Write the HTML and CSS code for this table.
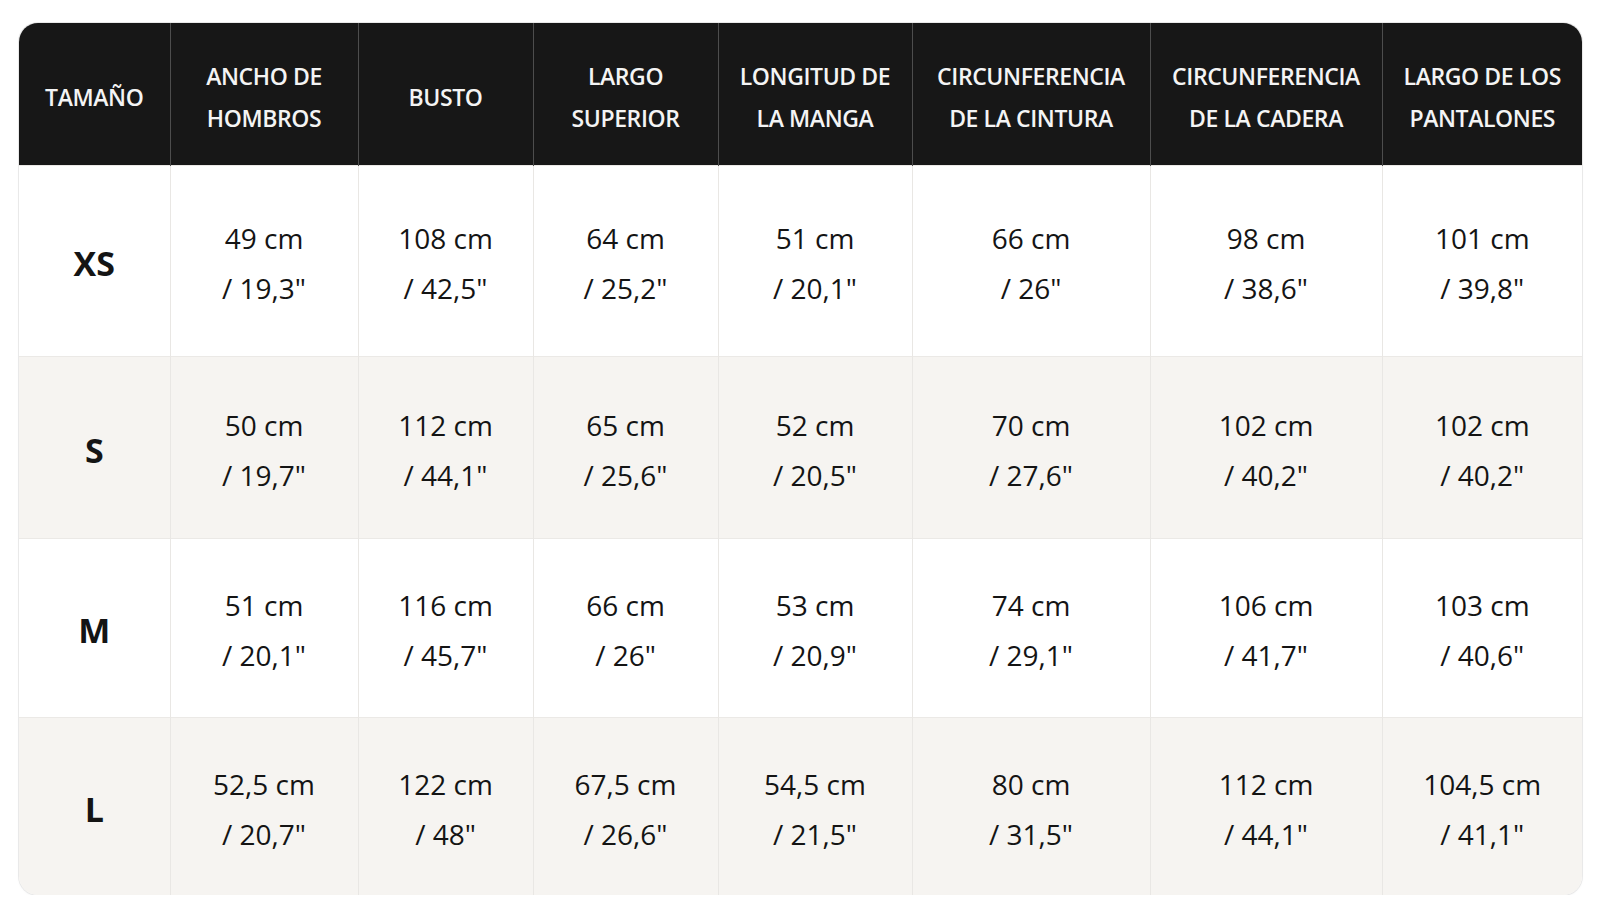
FILE: index.html
```html
<!DOCTYPE html>
<html lang="es">
<head>
<meta charset="utf-8">
<title>Tabla de tallas</title>
<link rel="stylesheet" href="styles.css">
</head>
<body>
<div class="wrap">
<table class="sizes">
<colgroup>
<col class="c1"><col class="c2"><col class="c3"><col class="c4"><col class="c5"><col class="c6"><col class="c7"><col class="c8">
</colgroup>
<thead>
<tr>
<th>TAMAÑO</th>
<th>ANCHO DE<br>HOMBROS</th>
<th>BUSTO</th>
<th>LARGO<br>SUPERIOR</th>
<th>LONGITUD DE<br>LA MANGA</th>
<th>CIRCUNFERENCIA<br>DE LA CINTURA</th>
<th>CIRCUNFERENCIA<br>DE LA CADERA</th>
<th>LARGO DE LOS<br>PANTALONES</th>
</tr>
</thead>
<tbody>
<tr class="r1">
<td class="size">XS</td>
<td>49 cm<br>/ 19,3"</td>
<td>108 cm<br>/ 42,5"</td>
<td>64 cm<br>/ 25,2"</td>
<td>51 cm<br>/ 20,1"</td>
<td>66 cm<br>/ 26"</td>
<td>98 cm<br>/ 38,6"</td>
<td>101 cm<br>/ 39,8"</td>
</tr>
<tr class="r2 alt">
<td class="size">S</td>
<td>50 cm<br>/ 19,7"</td>
<td>112 cm<br>/ 44,1"</td>
<td>65 cm<br>/ 25,6"</td>
<td>52 cm<br>/ 20,5"</td>
<td>70 cm<br>/ 27,6"</td>
<td>102 cm<br>/ 40,2"</td>
<td>102 cm<br>/ 40,2"</td>
</tr>
<tr class="r3">
<td class="size">M</td>
<td>51 cm<br>/ 20,1"</td>
<td>116 cm<br>/ 45,7"</td>
<td>66 cm<br>/ 26"</td>
<td>53 cm<br>/ 20,9"</td>
<td>74 cm<br>/ 29,1"</td>
<td>106 cm<br>/ 41,7"</td>
<td>103 cm<br>/ 40,6"</td>
</tr>
<tr class="r4 alt">
<td class="size">L</td>
<td>52,5 cm<br>/ 20,7"</td>
<td>122 cm<br>/ 48"</td>
<td>67,5 cm<br>/ 26,6"</td>
<td>54,5 cm<br>/ 21,5"</td>
<td>80 cm<br>/ 31,5"</td>
<td>112 cm<br>/ 44,1"</td>
<td>104,5 cm<br>/ 41,1"</td>
</tr>
</tbody>
</table>
</div>
</body>
</html>
```
FILE: styles.css
```css
html, body {
  margin: 0;
  padding: 0;
  background: #ffffff;
}
html {
  height: 918px;
  overflow: hidden;
}
body {
  padding: 23px 0 0 19px;
  font-family: "Open Sans", "Noto Sans", "Liberation Sans", sans-serif;
  color: #141414;
}
.wrap {
  width: 1563px;
  border-radius: 19px;
  overflow: hidden;
  box-shadow: 0 0 0 1px #e9e9e9, 0 1px 3px rgba(0, 0, 0, 0.05);
}
.sizes {
  width: 1563px;
  border-collapse: collapse;
  table-layout: fixed;
}
.c1 { width: 151px; }
.c2 { width: 188px; }
.c3 { width: 175px; }
.c4 { width: 185px; }
.c5 { width: 194px; }
.c6 { width: 238px; }
.c7 { width: 232px; }
.c8 { width: 200px; }
th {
  height: 137px;
  padding: 5px 0 0;
  background: #171717;
  color: #f4f4f4;
  font-weight: 600;
  font-size: 23px;
  line-height: 42px;
  letter-spacing: -0.4px;
  text-align: center;
  vertical-align: middle;
  border-left: 1px solid #4d4d4d;
}
th:first-child { border-left: none; }
td {
  padding: 4px 0 0;
  text-align: center;
  vertical-align: middle;
  font-size: 28px;
  line-height: 50px;
  font-weight: 400;
  border-left: 1px solid #e9e7e4;
  border-top: 1px solid #ebe9e6;
  background: #ffffff;
}
td:first-child { border-left: none; }
tr.alt td { background: #f6f4f1; }
td.size {
  font-weight: 700;
  font-size: 34px;
}
.r1 td { height: 186px; }
.r2 td { height: 177px; }
.r3 td { height: 174px; }
.r4 td { height: 173px; }
```
